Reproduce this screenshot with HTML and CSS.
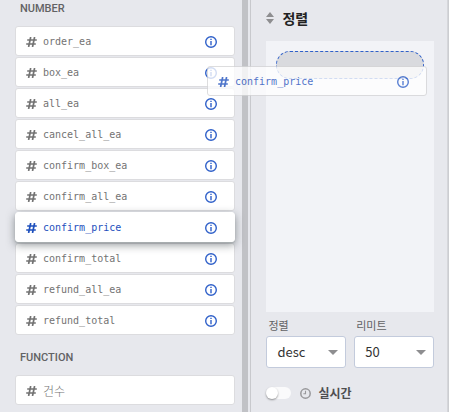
FILE: index.html
```html
<!DOCTYPE html>
<html lang="ko">
<head>
<meta charset="utf-8">
<meta name="viewport" content="width=device-width, initial-scale=1">
<title>정렬</title>
<link rel="stylesheet" href="styles.css">
</head>
<body>
<svg class="defs" aria-hidden="true">
  <symbol id="hash" viewBox="0 0 11 10"><path d="M4.7 0 2.6 10M8.6 0 6.5 10M1.2 3H10.8M.2 7H9.8" fill="none" stroke="currentColor" stroke-width="1.7"/></symbol>
  <symbol id="info" viewBox="0 0 12 12"><circle cx="6" cy="6" r="5.3" fill="none" stroke="currentColor" stroke-width="1.4"/><path d="M5.3 2.7h1.4V4H5.3zM5.3 5.1h1.4v4.2H5.3z" fill="currentColor"/></symbol>
</svg>
<main class="app">
  <section class="fields">
    <h2 class="group-title">NUMBER</h2>
    <ul class="list">
      <li class="field"><svg class="hash"><use href="#hash"/></svg><span class="name">order_ea</span><button class="info" aria-label="order_ea"><svg><use href="#info"/></svg></button></li>
      <li class="field"><svg class="hash"><use href="#hash"/></svg><span class="name">box_ea</span><button class="info" aria-label="box_ea"><svg><use href="#info"/></svg></button></li>
      <li class="field"><svg class="hash"><use href="#hash"/></svg><span class="name">all_ea</span><button class="info" aria-label="all_ea"><svg><use href="#info"/></svg></button></li>
      <li class="field"><svg class="hash"><use href="#hash"/></svg><span class="name">cancel_all_ea</span><button class="info" aria-label="cancel_all_ea"><svg><use href="#info"/></svg></button></li>
      <li class="field"><svg class="hash"><use href="#hash"/></svg><span class="name">confirm_box_ea</span><button class="info" aria-label="confirm_box_ea"><svg><use href="#info"/></svg></button></li>
      <li class="field"><svg class="hash"><use href="#hash"/></svg><span class="name">confirm_all_ea</span><button class="info" aria-label="confirm_all_ea"><svg><use href="#info"/></svg></button></li>
      <li class="field active"><svg class="hash"><use href="#hash"/></svg><span class="name">confirm_price</span><button class="info" aria-label="confirm_price"><svg><use href="#info"/></svg></button></li>
      <li class="field"><svg class="hash"><use href="#hash"/></svg><span class="name">confirm_total</span><button class="info" aria-label="confirm_total"><svg><use href="#info"/></svg></button></li>
      <li class="field"><svg class="hash"><use href="#hash"/></svg><span class="name">refund_all_ea</span><button class="info" aria-label="refund_all_ea"><svg><use href="#info"/></svg></button></li>
      <li class="field"><svg class="hash"><use href="#hash"/></svg><span class="name">refund_total</span><button class="info" aria-label="refund_total"><svg><use href="#info"/></svg></button></li>
    </ul>
    <h2 class="group-title">FUNCTION</h2>
    <ul class="list">
      <li class="field"><svg class="hash"><use href="#hash"/></svg><span class="name korean">건수</span></li>
    </ul>
  </section>
  <div class="scrollbar"></div>
  <section class="sort">
    <h1 class="sort-title"><svg class="sorter" viewBox="0 0 8 12"><path d="M0 5 4 0l4 5zM0 7h8l-4 5z" fill="#8e8e90"/></svg>정렬</h1>
    <div class="dropzone"><div class="slot"></div></div>
    <div class="options">
      <div class="option"><label for="order">정렬</label><div class="select"><select id="order"><option>desc</option></select></div></div>
      <div class="option"><label for="limit">리미트</label><div class="select"><select id="limit"><option>50</option></select></div></div>
    </div>
    <label class="live"><input type="checkbox" class="switch"><svg class="clock" viewBox="0 0 11 11"><circle cx="5.5" cy="5.5" r="4.7" fill="none" stroke="#98989b" stroke-width="1.5"/><path d="M5.5 2.7v3H3.4" fill="none" stroke="#98989b" stroke-width="1.1"/></svg>실시간</label>
  </section>
  <div class="edge"></div>
  <div class="field ghost"><svg class="hash"><use href="#hash"/></svg><span class="name">confirm_price</span><button class="info" aria-label="confirm_price"><svg><use href="#info"/></svg></button></div>
</main>
</body>
</html>
```

FILE: styles.css
```css
* { box-sizing: border-box; }

body {
  margin: 0;
  background: #e7e8ed;
  color: #737373;
  font-family: "Noto Sans CJK KR", sans-serif;
}

.defs { position: absolute; width: 0; height: 0; }

.app {
  position: relative;
  display: flex;
  height: 100vh;
  overflow: hidden;
}

.fields { flex: 0 0 54%; padding: 0 7px 0 15px; }

.group-title {
  margin: 0 0 8px;
  padding-left: 5px;
  color: #626264;
  font: 500 11px/18px Roboto, sans-serif;
}

.list + .group-title { margin-top: 14px; }

.list {
  display: flex;
  flex-direction: column;
  gap: 1px;
  margin: 0;
  padding: 0;
  list-style: none;
}

.field {
  display: flex;
  align-items: center;
  height: 30px;
  padding: 2px 17px 0 10px;
  border: 1px solid #dcdcdf;
  border-radius: 3px;
  background: #fff;
}

.hash { width: 11px; height: 10px; margin-right: 6px; }

.name {
  flex: 1;
  font: 10px/14px "DejaVu Sans Mono", monospace;
}

.korean { font: 300 12px/18px "Noto Sans CJK KR", sans-serif; }

.info {
  display: flex;
  padding: 0;
  border: 0;
  background: none;
  color: #2f60c9;
}

.info svg { width: 12px; height: 12px; }

.active, .ghost { color: #1e50bd; }

.active {
  position: relative;
  border-color: #fff;
  box-shadow: 0 1px 1px #a8aeb0, 0 3px 8px rgba(40, 50, 55, .5);
}

.ghost {
  position: absolute;
  top: 66px;
  left: 207px;
  width: 220px;
  border-color: #d4d4d6;
  opacity: .78;
}

.scrollbar { flex: 0 0 6px; background: #c1c2c6; }

.sort {
  flex: 1;
  min-width: 0;
  margin-left: 2px;
  padding: 8px 13px 0 15px;
  border-left: 1px solid #c8c9cd;
}

.sort-title {
  display: flex;
  align-items: center;
  gap: 8px;
  margin: 0 0 13px;
  color: #222;
  font-size: 14px;
  font-weight: 700;
  line-height: 20px;
}

.sorter { width: 8px; height: 12px; }

.dropzone {
  height: 271px;
  padding: 10px;
  background: #f2f3f7;
}

.slot {
  height: 28px;
  border: 1px dashed #2f60c9;
  border-radius: 14px;
  background: #d9dade;
}

.options { display: flex; gap: 8px; padding-top: 5px; }

.option { flex: 1; min-width: 0; }

.option label {
  display: block;
  padding: 0 2px;
  color: #626264;
  font-size: 11px;
  line-height: 16px;
}

.select { position: relative; margin-top: 3px; }

.select::after {
  content: "";
  position: absolute;
  top: 14px;
  right: 8px;
  border: 5px solid transparent;
  border-top-color: #8e8e90;
  border-bottom: 0;
  pointer-events: none;
}

select {
  appearance: none;
  display: block;
  width: 100%;
  height: 32px;
  padding: 0 10px;
  border: 1px solid #c3cbdc;
  border-radius: 3px;
  background: #fff;
  color: #333;
  font: 13px/20px "Noto Sans CJK KR", sans-serif;
}

.live {
  display: flex;
  align-items: center;
  margin-top: 16px;
  color: #4e4e50;
  font-size: 12px;
  font-weight: 700;
  line-height: 18px;
}

.switch {
  appearance: none;
  width: 25px;
  height: 12px;
  margin: 0 9px 0 0;
  border-radius: 6px;
  background: #fafafb;
}

.switch::before {
  content: "";
  display: block;
  width: 12px;
  height: 12px;
  border-radius: 50%;
  background: #fff;
  box-shadow: 0 1px 2px rgba(0, 0, 0, .4);
}

.clock { width: 11px; height: 11px; margin-right: 7px; }

.edge {
  flex: 0 0 2px;
  background: linear-gradient(to right, #d9dade, #c8c9cd);
}
```
